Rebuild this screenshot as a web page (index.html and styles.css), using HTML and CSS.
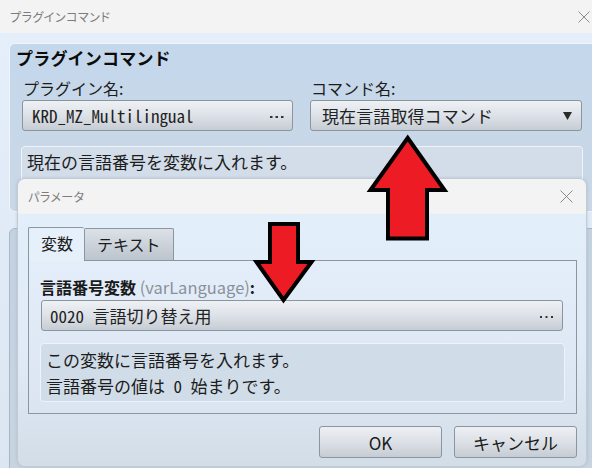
FILE: index.html
```html
<!DOCTYPE html>
<html lang="ja">
  <head>
    <meta charset="UTF-8" />
    <title>プラグインコマンド</title>
    <link rel="stylesheet" href="styles.css">
  </head>
  <body>
    <div class="window">
      <div class="titlebar">
        <span class="title">プラグインコマンド</span>
        <svg class="close" width="12" height="12" viewBox="0 0 12 12">
          <path d="M0.5 0.5L11.5 11.5M11.5 0.5L0.5 11.5" stroke="#8a8a8a" stroke-width="1" fill="none" />
        </svg>
      </div>
      <div class="window-body">
        <section class="group">
          <h2 class="group-title">プラグインコマンド</h2>
          <div class="group-row">
            <div class="field-col">
              <label class="lbl">プラグイン名:</label>
              <div class="picker">
                <span class="mono">KRD_MZ_Multilingual</span>
                <svg class="dots" width="14" height="3" viewBox="0 0 14 3">
                  <rect x="0" y="0" width="2.5" height="2" fill="#333" />
                  <rect x="5.5" y="0" width="2.5" height="2" fill="#333" />
                  <rect x="11" y="0" width="2.5" height="2" fill="#333" />
                </svg>
              </div>
            </div>
            <div class="field-col">
              <label class="lbl">コマンド名:</label>
              <div class="picker combo">
                <span>現在言語取得コマンド</span>
                <svg class="caret" width="9" height="8" viewBox="0 0 9 8">
                  <path d="M0 0H9L4.5 8Z" fill="#2b2b2b" />
                </svg>
              </div>
            </div>
          </div>
          <div class="desc desc-main">現在の言語番号を変数に入れます。</div>
        </section>
        <section class="group group-lower"></section>
      </div>
    </div>

    <div class="dialog">
      <div class="dialog-titlebar">
        <span class="title">パラメータ</span>
        <svg class="dialog-close" width="13" height="13" viewBox="0 0 13 13">
          <path d="M0.5 0.5L12.5 12.5M12.5 0.5L0.5 12.5" stroke="#8a8a8a" stroke-width="1" fill="none" />
        </svg>
      </div>
      <div class="dialog-body">
        <div class="tabs">
          <div class="tab active">変数</div>
          <div class="tab">テキスト</div>
        </div>
        <div class="tab-panel">
          <label class="param-lbl">言語番号変数 <span class="key">(varLanguage)</span>:</label>
          <div class="picker param-picker">
            <span class="mono">0020 言語切り替え用</span>
            <svg class="dots" width="14" height="3" viewBox="0 0 14 3">
              <rect x="0" y="0" width="2" height="2" fill="#333" />
              <rect x="5.5" y="0" width="2" height="2" fill="#333" />
              <rect x="11" y="0" width="2" height="2" fill="#333" />
            </svg>
          </div>
          <div class="desc desc-param">
            この変数に言語番号を入れます。<br />
            言語番号の値は<span class="mono"> 0 </span>始まりです。
          </div>
        </div>
        <div class="buttons">
          <button class="btn">OK</button>
          <button class="btn">キャンセル</button>
        </div>
      </div>
    </div>

    <!-- red arrows drawn over the screenshot -->
    <svg class="arrows" width="592" height="468" viewBox="0 0 592 468">
      <polygon points="407.7,138 444.5,190 427,190 427,238.5 388,238.5 388,190 370.5,190" fill="#ed1c24" stroke="#000" stroke-width="4" stroke-linejoin="miter" />
      <polygon points="270,224 298,224 298,262 311.5,262 283.5,300 256.5,262 270,262" fill="#ed1c24" stroke="#000" stroke-width="4" stroke-linejoin="miter" />
    </svg>
  </body>
</html>
```

FILE: styles.css
```css
* {
  box-sizing: border-box;
}
body {
  margin: 0;
  width: 592px;
  height: 468px;
  overflow: hidden;
  position: relative;
  font-family: "Noto Sans CJK JP", "Noto Sans", sans-serif;
  color: #1c1c1c;
  background: #e3eefb;
}
.mono {
  font-family: "Noto Sans Mono CJK JP", "DejaVu Sans Mono", monospace;
  font-size: 17px;
  white-space: pre;
}
.window {
  width: 592px;
  height: 468px;
  display: flex;
  flex-direction: column;
}
.titlebar {
  height: 33px;
  flex: none;
  background: #f3f3f3;
  display: flex;
  align-items: center;
  justify-content: space-between;
  padding: 0 2px 0 10px;
}
.title {
  font-size: 12px;
  color: #7c7c7c;
  font-feature-settings: "palt";
  letter-spacing: 0.5px;
}
.window-body {
  flex: 1;
  padding: 10px 0 0 9px;
  background: linear-gradient(#e4effb, #dbe6f2);
  overflow: hidden;
}
.group {
  margin-right: -20px;
  background: linear-gradient(#c4d7eb, #cad8e6);
  border: 1px solid #eef4fa;
  border-radius: 6px;
  padding: 4px 0 5px 6px;
}
.group-title {
  margin: 0;
  font-size: 17px;
  font-weight: 700;
  line-height: 20px;
  letter-spacing: 0.2px;
  color: #0c0c0c;
}
.group-row {
  display: grid;
  grid-template-columns: 271px 272px;
  column-gap: 17px;
  margin-top: 10px;
  padding-left: 6px;
}
.lbl {
  display: block;
  font-size: 16px;
  line-height: 20px;
  padding-left: 1px;
  margin-bottom: 2px;
}
.picker {
  height: 31px;
  display: flex;
  align-items: center;
  justify-content: space-between;
  background: linear-gradient(#eef1f4, #dde2e8 50%, #c6ccd3);
  border: 1px solid #8c959e;
  border-radius: 3px;
  padding: 0 8px 0 9px;
  font-size: 17px;
  color: #222;
}
.combo {
  padding: 0 9px 0 11px;
  letter-spacing: 0.1px;
}
.dots {
  margin-top: 4px;
}
.caret {
  margin-top: 1px;
}
.desc {
  background: #d2dde9;
  border: 1.5px solid #eef3f9;
  border-radius: 4px;
  font-size: 17px;
  line-height: 26px;
  color: #1c1c1c;
}
.desc-main {
  width: 562px;
  height: 60px;
  margin: 15px 0 0 5px;
  padding: 2px 5px;
}
.group-lower {
  margin-top: 16px;
  height: 260px;
  background: linear-gradient(#c3d2e1, #c8d4e0);
  border-color: #a9b7c6;
}

/* parameter dialog on top */
.dialog {
  position: absolute;
  left: 17px;
  top: 178px;
  width: 570px;
  height: 289px;
  border: 1px solid #c2cbd4;
  border-radius: 8px;
  overflow: hidden;
  display: flex;
  flex-direction: column;
  box-shadow: 0 0 3px rgba(90, 110, 130, 0.25);
}
.dialog-titlebar {
  height: 35px;
  flex: none;
  background: #f3f3f3;
  display: flex;
  align-items: center;
  justify-content: space-between;
  padding: 0 13px 0 10px;
}
.dialog-body {
  flex: 1;
  background: linear-gradient(#e3eefb, #e0ebf7 55%, #d2dde8);
  padding: 13px 9px 0 10px;
}
.tabs {
  display: flex;
  align-items: flex-end;
  height: 33px;
}
.tab {
  height: 32px;
  border: 1px solid #8c969f;
  border-bottom: none;
  background: linear-gradient(#dce1e7, #bcc4cd);
  font-size: 16px;
  line-height: 30px;
  padding: 0 12px;
  border-radius: 2px 2px 0 0;
  color: #1c1c1c;
}
.tab.active {
  height: 34px;
  margin-bottom: -1px;
  position: relative;
  background: #e6f0fb;
  border-right: none;
  padding: 0 11px 0 12px;
  width: 56px;
}
.tab.active + .tab {
  padding-left: 12px;
}
.tab-panel {
  width: 549px;
  height: 154px;
  border: 1px solid #8c969f;
  background: linear-gradient(#e4eefa, #dae5f1);
  padding: 16px 0 0 11px;
}
.param-lbl {
  display: block;
  font-size: 16px;
  line-height: 20px;
  font-weight: 700;
  color: #1a1a1a;
}
.param-lbl .key {
  font-weight: 400;
  font-size: 16.5px;
  color: #8a9098;
}
.param-picker {
  width: 522px;
  margin: 3px 0 0 1px;
  padding: 0 8px 0 8px;
}
.desc-param {
  width: 525px;
  height: 59px;
  margin-top: 12px;
  padding: 3px 5px;
  background: #d0dce8;
}
.buttons {
  display: flex;
  justify-content: flex-end;
  gap: 12px;
  width: 549px;
  margin-top: 12px;
}
.btn {
  width: 123px;
  height: 32px;
  border: 1px solid #8c959e;
  border-radius: 3px;
  background: linear-gradient(#edf0f3, #dce1e7 50%, #c6ccd3);
  font-family: "Noto Sans CJK JP", "Noto Sans", sans-serif;
  font-size: 17px;
  color: #1a1a1a;
  padding: 0;
}
.arrows {
  position: absolute;
  left: 0;
  top: 0;
  pointer-events: none;
}
```
